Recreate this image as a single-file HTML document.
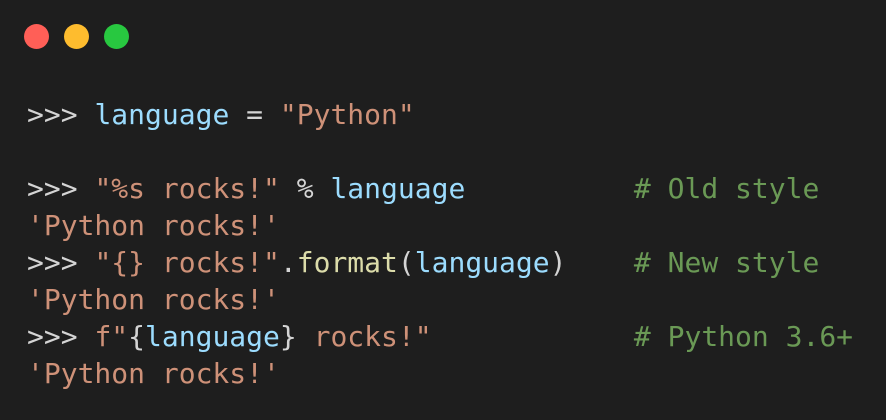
<!DOCTYPE html>
<html><head><style>
html,body{margin:0;padding:0;background:#1e1e1e;width:886px;height:420px;overflow:hidden}
.d{position:absolute;top:24px;width:25px;height:25px;border-radius:50%}
pre{position:absolute;left:27px;top:96px;margin:0;font-family:"DejaVu Sans Mono","Liberation Mono",monospace;font-size:28px;line-height:37px;color:#d4d4d4}
.v{color:#9cdcfe}.s{color:#ce9178}.f{color:#dcdcaa}.c{color:#6a9955}
</style></head><body>
<div class="d" style="left:24px;background:#ff5f57"></div>
<div class="d" style="left:64px;background:#febc2e"></div>
<div class="d" style="left:104px;background:#28c840"></div>
<pre>&gt;&gt;&gt; <span class="v">language</span> = <span class="s">"Python"</span>

&gt;&gt;&gt; <span class="s">"%s rocks!"</span> % <span class="v">language</span>          <span class="c"># Old style</span>
<span class="s">'Python rocks!'</span>
&gt;&gt;&gt; <span class="s">"{} rocks!"</span>.<span class="f">format</span>(<span class="v">language</span>)    <span class="c"># New style</span>
<span class="s">'Python rocks!'</span>
&gt;&gt;&gt; <span class="s">f"</span>{<span class="v">language</span>}<span class="s"> rocks!"</span>            <span class="c"># Python 3.6+</span>
<span class="s">'Python rocks!'</span></pre>
</body></html>
